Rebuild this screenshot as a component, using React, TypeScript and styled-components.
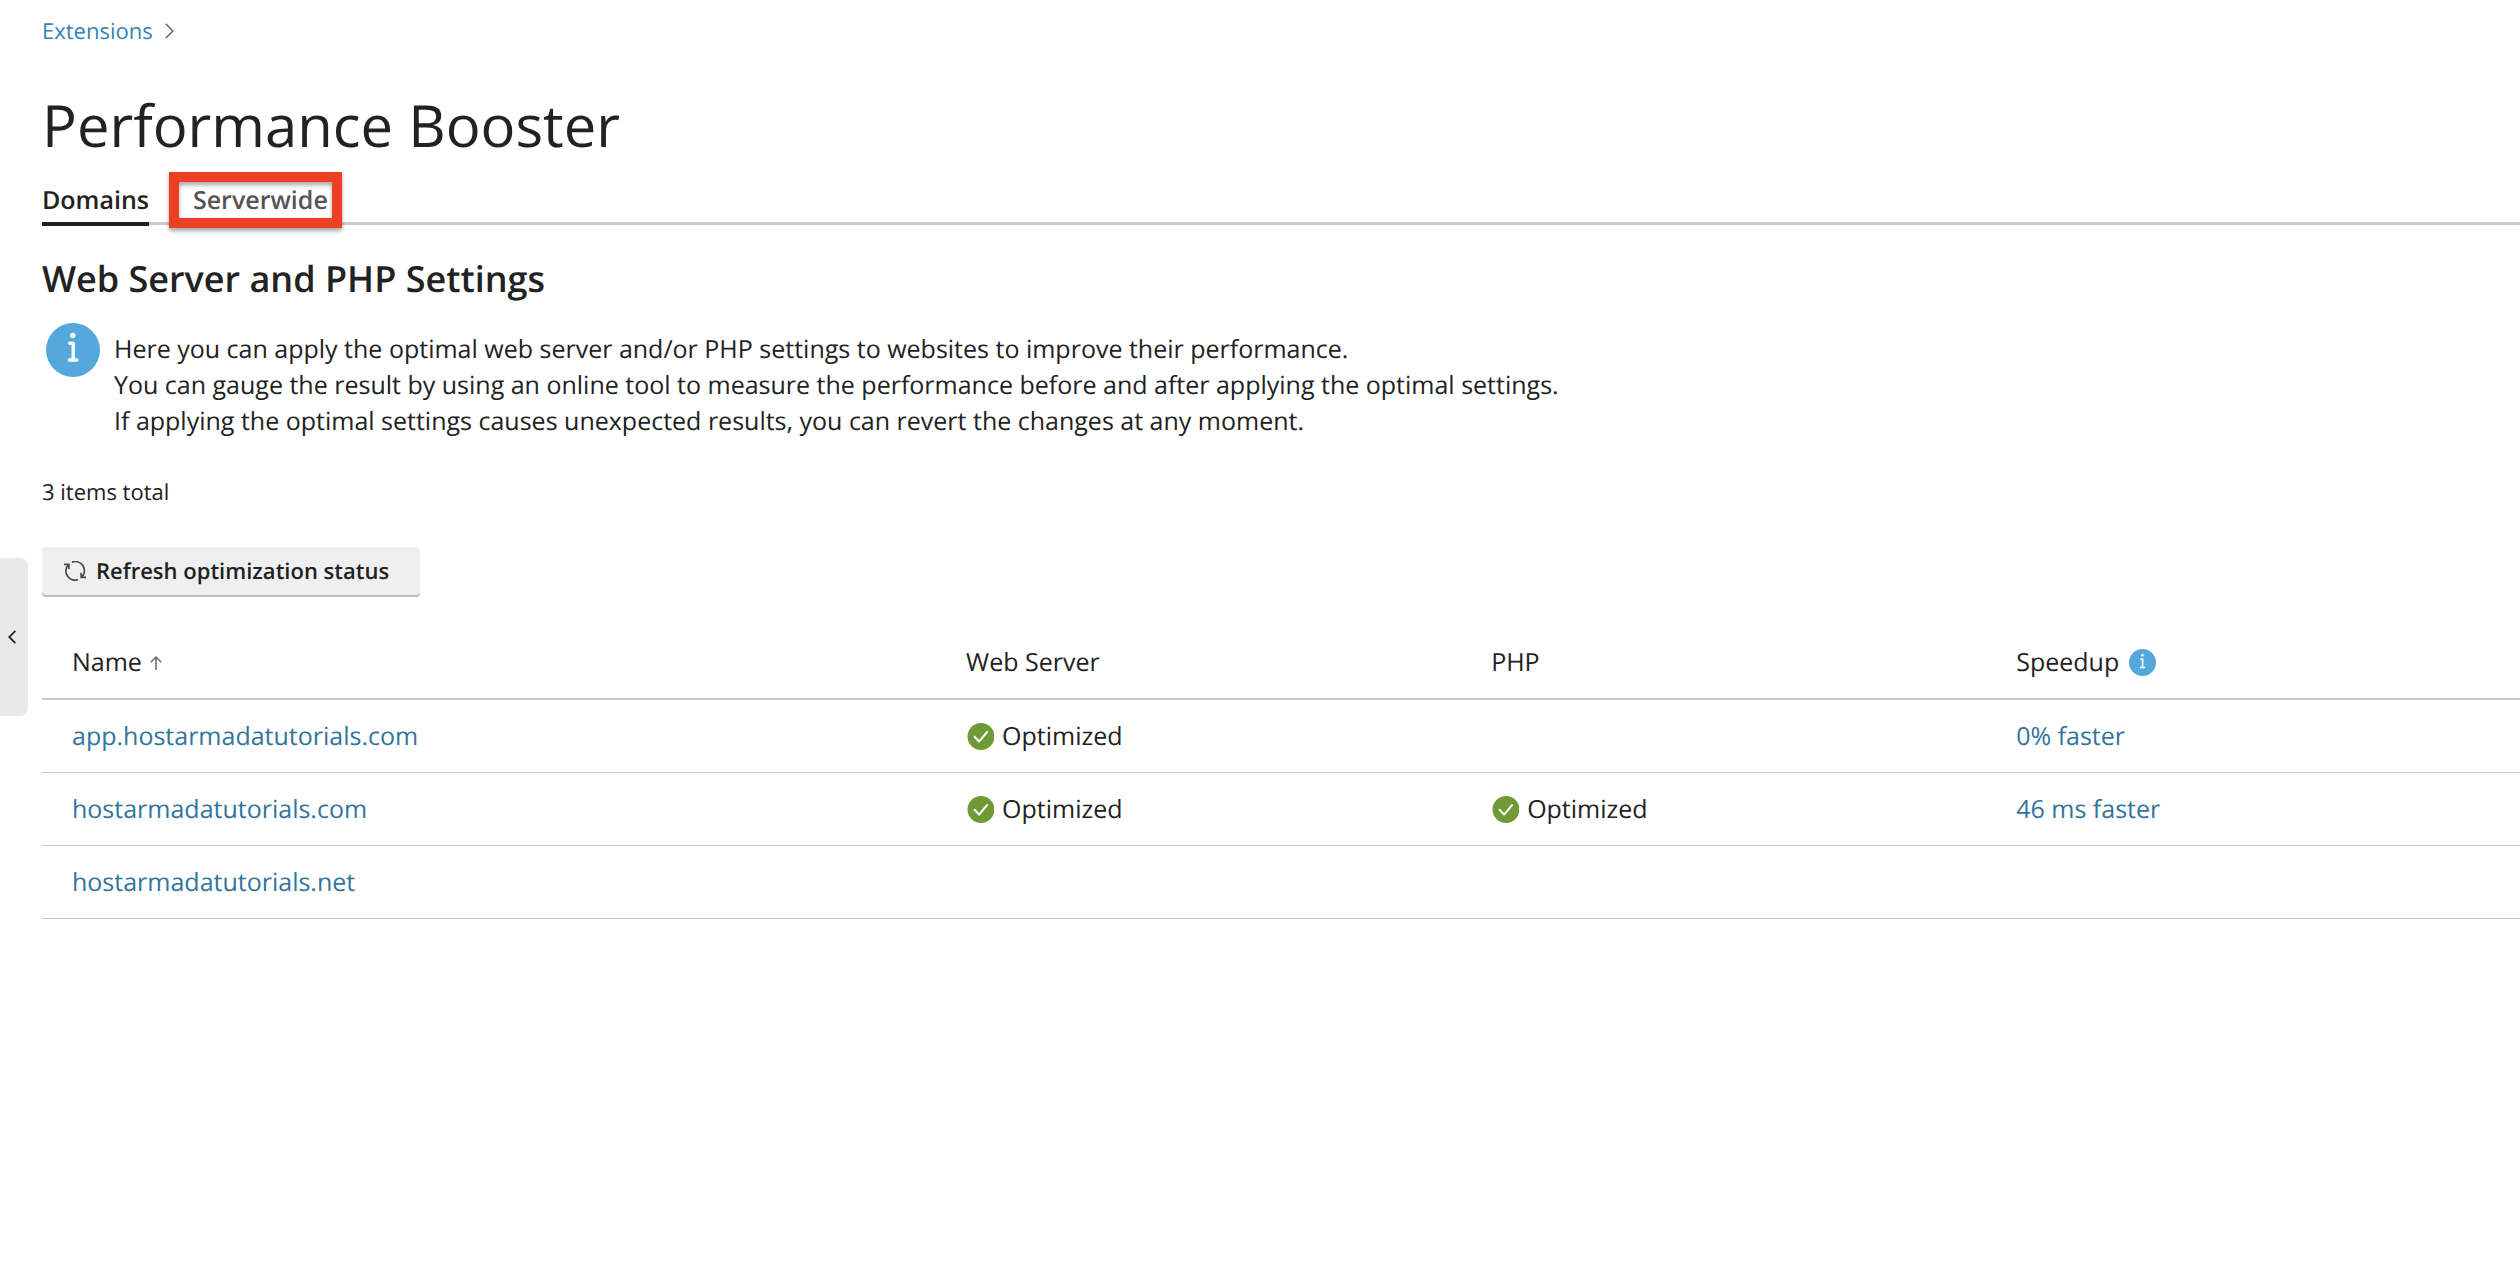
import React from "react";
import styled, { createGlobalStyle } from "styled-components";

const color = {
  text: "#222222",
  muted: "#555555",
  link: "#31759d",
  crumb: "#3783b6",
  line: "#c9c9c9",
  info: "#54a8db",
  success: "#6f9a37",
  highlight: "#eb4026",
};

const GlobalStyle = createGlobalStyle`
  *, *::before, *::after { box-sizing: border-box; }
  body {
    margin: 0;
    background: #fff;
    color: ${color.text};
    font-family: "Open Sans", "Noto Sans", sans-serif;
    font-size: 25px;
    line-height: 36px;
    text-rendering: geometricPrecision;
    overflow-x: hidden;
  }
  button { font: inherit; color: inherit; border: 0; cursor: pointer; text-rendering: inherit; }
`;

const Page = styled.main`
  padding: 16px 0 64px 42px;
`;

const SidebarToggle = styled.button`
  position: fixed;
  left: 0;
  top: 558px;
  width: 28px;
  height: 158px;
  padding: 0 0 0 8px;
  display: flex;
  align-items: center;
  background: #e9e9e9;
  border-radius: 0 8px 8px 0;
`;

const Breadcrumbs = styled.nav`
  display: flex;
  align-items: center;
  gap: 12px;
  font-size: 22px;
  line-height: 30px;
`;

const Link = styled.a<{ $crumb?: boolean }>`
  color: ${(p) => (p.$crumb ? color.crumb : color.link)};
  text-decoration: none;
`;

const Title = styled.h1`
  margin: 43px 0 20px;
  font-size: 58px;
  line-height: 72px;
  font-weight: 400;
`;

const TabList = styled.div`
  display: flex;
  gap: 44px;
  height: 44px;
  border-bottom: 3px solid ${color.line};
`;

const Tab = styled.button<{ $active?: boolean }>`
  position: relative;
  height: 45px;
  padding: 0 0 4px;
  background: none;
  font-weight: 600;
  color: ${(p) => (p.$active ? color.text : color.muted)};
  border-bottom: ${(p) => (p.$active ? `4px solid ${color.text}` : "4px solid transparent")};
`;

const Highlight = styled.span`
  position: absolute;
  inset: -9px -14px -6px -24px;
  border: 10px solid ${color.highlight};
  box-shadow: 0 3px 4px rgba(0, 0, 0, 0.35), inset 0 3px 4px rgba(0, 0, 0, 0.35);
  pointer-events: none;
`;

const SectionTitle = styled.h2`
  margin: 30px 0 20px;
  font-size: 36px;
  line-height: 48px;
  font-weight: 600;
`;

const Hint = styled.section`
  display: flex;
  gap: 14px;
  padding-left: 4px;
`;

const HintText = styled.p`
  margin: 8px 0 0;
`;

const Total = styled.p`
  margin: 38px 0 40px;
  font-size: 22px;
  line-height: 30px;
`;

const ActionButton = styled.button`
  display: flex;
  align-items: center;
  gap: 10px;
  height: 50px;
  padding: 0 31px 2px 22px;
  background: #efefef;
  border-radius: 4px;
  box-shadow: inset 0 -2px 0 #bdbdbd;
  font-size: 22px;
  font-weight: 600;
`;

const Table = styled.table`
  width: 100%;
  margin-top: 29px;
  table-layout: fixed;
  border-collapse: separate;
  border-spacing: 0;
`;

const Column = styled.col<{ $width?: string }>`
  width: ${(p) => p.$width ?? "auto"};
`;

const HeadCell = styled.th`
  padding: 18px 30px;
  border-bottom: 2px solid ${color.line};
  font-weight: 400;
  text-align: left;
`;

const Cell = styled.td`
  height: 73px;
  padding: 18px 30px;
  border-bottom: 1px solid ${color.line};
`;

const Inline = styled.span<{ $gap: number }>`
  display: flex;
  align-items: center;
  gap: ${(p) => p.$gap}px;
`;

const Icon = styled.svg`
  display: block;
  flex: none;
`;

const InfoIcon = ({ size }: { size: number }) => (
  <Icon width={size} height={size} viewBox="0 0 54 54" aria-hidden="true">
    <circle cx="27" cy="27" r="27" fill={color.info} />
    <circle cx="26.8" cy="12.5" r="2.7" fill="#fff" />
    <path d="M23.8 20.2h3.4v16.5M23.3 37h7.6" fill="none" stroke="#fff" strokeWidth="3.4" strokeLinecap="round" strokeLinejoin="round" />
  </Icon>
);

const CheckIcon = () => (
  <Icon width="28" height="28" viewBox="0 0 28 28" aria-hidden="true">
    <circle cx="15" cy="14.5" r="13.5" fill={color.success} />
    <path d="M8.6 14.8l4.5 4.8 8-9.6" fill="none" stroke="#fff" strokeWidth="2" strokeLinecap="round" strokeLinejoin="round" />
  </Icon>
);

const RefreshIcon = () => (
  <Icon width="22" height="20" viewBox="0 0 22 20" fill="none" stroke="#4a4a4a" strokeWidth="1.8" aria-hidden="true">
    <path d="M8 1.1A9.2 9.2 0 0 1 18 15.9M14 18.6A9.2 9.2 0 0 1 4.2 3.8" />
    <path d="M0 3.4h4.8v4.6M22 16.4h-4.8v-4.6" />
  </Icon>
);

const SortIcon = () => (
  <Icon width="12" height="16" viewBox="0 0 12 16" fill="none" stroke="#666" strokeWidth="1.5" aria-hidden="true">
    <path d="M6 16V3.2M0.8 8.2L6 3l5.2 5.2" />
  </Icon>
);

const Chevron = ({ left }: { left?: boolean }) =>
  left ? (
    <Icon width="8" height="14" viewBox="0 0 8 14" fill="none" stroke="#222" strokeWidth="1.8" aria-hidden="true">
      <path d="M7.4 0.8L1.2 7l6.2 6.2" />
    </Icon>
  ) : (
    <Icon width="9" height="16" viewBox="0 0 9 16" fill="none" stroke="#666" strokeWidth="1.5" aria-hidden="true">
      <path d="M0.8 0.8L7.8 8l-7 7.2" />
    </Icon>
  );

const Optimized = () => (
  <Inline $gap={8}>
    <CheckIcon />
    Optimized
  </Inline>
);

const domains = [
  { name: "app.hostarmadatutorials.com", web: true, php: false, speedup: "0% faster" },
  { name: "hostarmadatutorials.com", web: true, php: true, speedup: "46 ms faster" },
  { name: "hostarmadatutorials.net", web: false, php: false, speedup: "" },
];

export default function App() {
  return (
    <>
      <GlobalStyle />
      <SidebarToggle type="button" aria-label="Collapse sidebar">
        <Chevron left />
      </SidebarToggle>
      <Page>
        <Breadcrumbs aria-label="Breadcrumb">
          <Link $crumb href="#extensions">Extensions</Link>
          <Chevron />
        </Breadcrumbs>
        <Title>Performance Booster</Title>
        <TabList role="tablist">
          <Tab type="button" role="tab" aria-selected="true" $active>Domains</Tab>
          <Tab type="button" role="tab" aria-selected="false">
            Serverwide
            <Highlight />
          </Tab>
        </TabList>
        <SectionTitle>Web Server and PHP Settings</SectionTitle>
        <Hint>
          <InfoIcon size={54} />
          <HintText>
            Here you can apply the optimal web server and/or PHP settings to websites to improve their performance.
            <br />
            You can gauge the result by using an online tool to measure the performance before and after applying the optimal settings.
            <br />
            If applying the optimal settings causes unexpected results, you can revert the changes at any moment.
          </HintText>
        </Hint>
        <Total>3 items total</Total>
        <ActionButton type="button">
          <RefreshIcon />
          Refresh optimization status
        </ActionButton>
        <Table>
          <colgroup>
            <Column $width="36.08%" />
            <Column $width="21.19%" />
            <Column $width="21.19%" />
            <Column />
          </colgroup>
          <thead>
            <tr>
              <HeadCell scope="col" aria-sort="ascending">
                <Inline $gap={8}>Name <SortIcon /></Inline>
              </HeadCell>
              <HeadCell scope="col">Web Server</HeadCell>
              <HeadCell scope="col">PHP</HeadCell>
              <HeadCell scope="col">
                <Inline $gap={10}>Speedup <InfoIcon size={27} /></Inline>
              </HeadCell>
            </tr>
          </thead>
          <tbody>
            {domains.map((d) => (
              <tr key={d.name}>
                <Cell><Link href={`#${d.name}`}>{d.name}</Link></Cell>
                <Cell>{d.web && <Optimized />}</Cell>
                <Cell>{d.php && <Optimized />}</Cell>
                <Cell>{d.speedup && <Link href={`#speedup-${d.name}`}>{d.speedup}</Link>}</Cell>
              </tr>
            ))}
          </tbody>
        </Table>
      </Page>
    </>
  );
}
